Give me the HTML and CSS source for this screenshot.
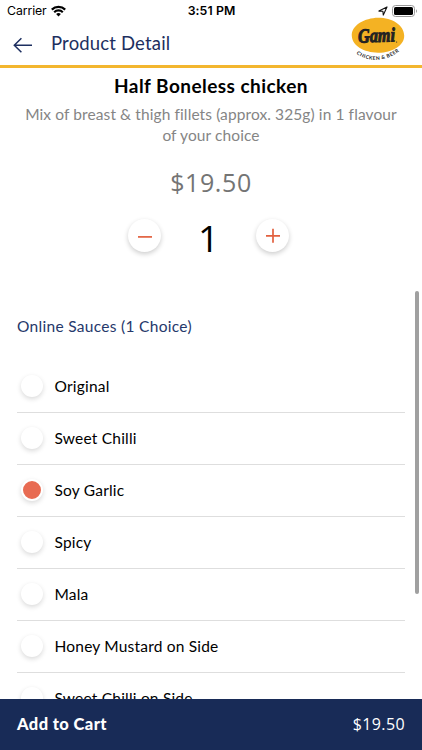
FILE: index.html
```html
<!DOCTYPE html>
<html lang="en">
<head>
<meta charset="utf-8">
<title>Product Detail</title>
<link rel="stylesheet" href="styles.css">
</head>
<body>
<div class="screen">
  <div class="status">
    <div class="carrier"><span>Carrier</span>
      <svg width="15" height="12" viewBox="0 0 15 12"><g fill="none" stroke="#000" stroke-width="2.2"><path d="M.8 4.6a9.5 9.5 0 0 1 13.4 0"/><path d="M3.2 7.2a6.1 6.1 0 0 1 8.6 0"/></g><path d="M7.5 11.6 5.1 9.1a3.4 3.4 0 0 1 4.8 0Z"/></svg>
    </div>
    <span class="time">3:51 PM</span>
    <div class="power">
      <svg width="10" height="10" viewBox="0 0 10 10"><path d="M.9 5.1 9 .9 5.3 9.1 4.9 5.2Z" fill="none" stroke="#111" stroke-width="1.1" stroke-linejoin="round"/></svg>
      <svg width="26" height="12" viewBox="0 0 26 12"><rect x=".5" y=".5" width="22" height="11" rx="3" fill="none" stroke="#999"/><rect x="2" y="2" width="19" height="8" rx="1.6"/><path d="M24 4.2c1.3.4 1.3 3.2 0 3.6Z" fill="#999"/></svg>
    </div>
  </div>
  <header class="header">
    <svg class="back" width="20" height="16" viewBox="0 0 20 16"><path d="M19 8.3H1.5M8.4 1.2 1.3 8.3l7.1 7" fill="none" stroke="#1d2f60" stroke-width="1.5"/></svg>
    <h1>Product Detail</h1>
    <svg class="logo" width="60" height="48" viewBox="0 0 60 48">
      <path d="M.8 19C.2 8 14 1 27 .8 41 .7 53 8 53.2 18.5 53.6 29 40 36 27 35.7 13 35.4 1.3 29 .8 19Z" fill="#f4b223"/>
      <text class="logo-name" x="7" y="25" textLength="37" lengthAdjust="spacingAndGlyphs" transform="rotate(-2 27 20)">Gami</text>
      <circle cx="45.6" cy="25" r=".6" fill="#222"/>
      <path id="arc" d="M5.4 36.6C17 45.4 35 45.4 48.8 33.6" fill="none"/>
      <text class="logo-tag"><textPath href="#arc" textLength="46">CHICKEN &amp; BEER</textPath></text>
    </svg>
  </header>
  <main class="content">
    <h2 class="name">Half Boneless chicken</h2>
    <p class="desc">Mix of breast &amp; thigh fillets (approx. 325g) in 1 flavour<br>of your choice</p>
    <div class="price">$19.50</div>
    <div class="stepper">
      <span class="round"><svg width="16" height="16" viewBox="0 0 16 16"><path d="M1 8.9h14" stroke="#e2603f" stroke-width="1.7"/></svg></span>
      <span class="qty">1</span>
      <span class="round"><svg width="16" height="16" viewBox="0 0 16 16"><path d="M1 7.8h14M8 .8v14" stroke="#e2603f" stroke-width="1.7"/></svg></span>
    </div>
    <h3 class="group">Online Sauces (1 Choice)</h3>
    <ul class="options">
      <li><i class="radio"></i><span>Original</span></li>
      <li><i class="radio"></i><span>Sweet Chilli</span></li>
      <li><i class="radio on"></i><span>Soy Garlic</span></li>
      <li><i class="radio"></i><span>Spicy</span></li>
      <li><i class="radio"></i><span>Mala</span></li>
      <li><i class="radio"></i><span>Honey Mustard on Side</span></li>
      <li><i class="radio"></i><span>Sweet Chilli on Side</span></li>
    </ul>
    <div class="scrollbar"></div>
  </main>
  <footer class="cart"><span class="add">Add to Cart</span><span class="total">$19.50</span></footer>
</div>
</body>
</html>
```
FILE: styles.css
```css
* { box-sizing: border-box; margin: 0; padding: 0; }
body { background: #fff; font-family: Lato, sans-serif; color: #000; }
.screen { width: 422px; height: 750px; display: flex; flex-direction: column; overflow: hidden; background: #fff; }
svg { display: block; }
.status { height: 22px; flex: none; display: grid; grid-template-columns: 1fr auto 1fr; align-items: center; padding: 0 6px 0 7px; font: 12.3px/22px Inter, sans-serif; }
.carrier { display: flex; align-items: center; gap: 4px; letter-spacing: -.1px; }
.time { font-weight: 600; letter-spacing: .1px; }
.power { display: flex; align-items: center; justify-content: flex-end; gap: 4px; margin-right: -2px; }
.header { height: 46px; flex: none; border-bottom: 3px solid #f3b62f; display: flex; align-items: center; padding: 0 12px 0 13px; }
.back { margin-top: 2px; }
h1 { margin-left: 18px; font-size: 18.5px; font-weight: 400; line-height: 24px; letter-spacing: .17px; color: #1d2f60; margin-top: -1px; }
.logo { margin-left: auto; margin-top: -6px; margin-right: -1px; overflow: visible; }
.logo-name { font: italic 700 20px "Liberation Serif", serif; fill: #222; stroke: #222; stroke-width: 1px; }
.logo-tag { font: 700 5px Lato, sans-serif; fill: #222; }
.content { position: relative; flex: 1; min-height: 0; overflow: hidden; padding: 6px 17px 0; }
.name { text-align: center; font-size: 19px; line-height: 24px; font-weight: 700; letter-spacing: .45px; }
.desc { margin-top: 6px; text-align: center; font-size: 15.5px; line-height: 21px; color: #858585; letter-spacing: .1px; white-space: nowrap; }
.price { margin-top: 18px; text-align: center; font: 25px/36px "Open Sans", sans-serif; color: #747474; letter-spacing: .6px; }
.stepper { margin-top: 17px; padding: 0 116px 0 111px; height: 40px; display: flex; align-items: center; justify-content: space-between; }
.round { width: 33px; height: 33px; border-radius: 50%; background: #fff; display: flex; align-items: center; justify-content: center; box-shadow: 0 2px 5px rgba(0,0,0,.2); margin-top: -3px; }
.qty { font: 37px/40px "Open Sans", sans-serif; margin-top: 1px; }
.group { margin-top: 58px; font-size: 15.5px; line-height: 22px; font-weight: 400; color: #26386b; letter-spacing: .3px; }
.options { list-style: none; margin-top: 24px; }
.options li { height: 52px; border-bottom: 1px solid #dedede; display: flex; align-items: center; padding: 0 0 2px 4px; font-size: 15.5px; letter-spacing: .2px; white-space: nowrap; }
.radio { width: 22px; height: 22px; border-radius: 50%; background: #fff; margin-right: 11.5px; box-shadow: 0 2px 5px rgba(0,0,0,.15); flex: none; }
.radio.on { background: #e86b52; border: 2px solid #fff; }
.scrollbar { position: absolute; right: 3px; top: 223px; width: 4px; height: 303px; border-radius: 2px; background: #a0a0a0; }
.cart { height: 51px; flex: none; background: #182b57; color: #fff; display: flex; align-items: center; justify-content: space-between; padding: 0 17px 2px; font-size: 16.5px; letter-spacing: .4px; }
.add { font-weight: 900; }
.total { font: 16px/22px "Open Sans", sans-serif; }
```
